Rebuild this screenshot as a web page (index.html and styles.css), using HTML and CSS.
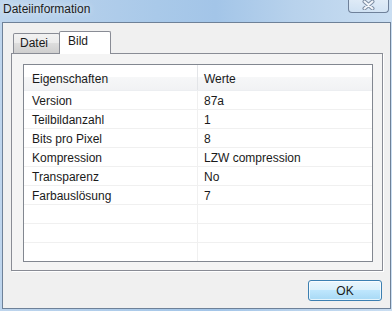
FILE: index.html
```html
<!DOCTYPE html>
<html lang="de">
<head>
    <meta charset="UTF-8">
    <title>Dateiinformation</title>
    <link rel="stylesheet" href="styles.css">
</head>
<body>
    <div class="window">
        <div class="titlebar">
            <span class="title">Dateiinformation</span>
            <span class="close">
                <svg width="15" height="10" viewBox="0 0 15 10">
                    <path d="M3.5 1.5 L11.5 8.5 M11.5 1.5 L3.5 8.5" stroke="#7d8da3" stroke-width="4" stroke-linecap="round"/>
                    <path d="M3.5 1.5 L11.5 8.5 M11.5 1.5 L3.5 8.5" stroke="#f4f7fb" stroke-width="2" stroke-linecap="round"/>
                </svg>
            </span>
        </div>
        <div class="client">
            <div class="tabs">
                <div class="tab">Datei</div>
                <div class="tab active">Bild</div>
            </div>
            <div class="panel">
                <div class="list">
                    <div class="row head"><div class="cell">Eigenschaften</div><div class="cell">Werte</div></div>
                    <div class="row"><div class="cell">Version</div><div class="cell">87a</div></div>
                    <div class="row"><div class="cell">Teilbildanzahl</div><div class="cell">1</div></div>
                    <div class="row"><div class="cell">Bits pro Pixel</div><div class="cell">8</div></div>
                    <div class="row"><div class="cell">Kompression</div><div class="cell">LZW compression</div></div>
                    <div class="row"><div class="cell">Transparenz</div><div class="cell">No</div></div>
                    <div class="row"><div class="cell">Farbauslösung</div><div class="cell">7</div></div>
                    <div class="row"><div class="cell"></div><div class="cell"></div></div>
                    <div class="row"><div class="cell"></div><div class="cell"></div></div>
                    <div class="row"><div class="cell"></div><div class="cell"></div></div>
                </div>
            </div>
            <div class="buttons">
                <button class="ok">OK</button>
            </div>
        </div>
    </div>
</body>
</html>
```

FILE: styles.css
```css
html,body{margin:0; padding:0; width:392px; height:311px; overflow:hidden;}
body{font-family:"Liberation Sans", Arial, sans-serif; font-size:12px; color:#1a1a1a;}

.window{
    width:392px; height:311px; display:flex; flex-direction:column;
    background:linear-gradient(to right, #bed5ed 0%, #a9c9e9 40%, #a3c5e8 55%, #b8d2ec 75%, #cadef2 100%);
}

.titlebar{height:22px; display:flex; justify-content:space-between; align-items:flex-start; padding-left:3px;}
.title{line-height:18px; color:#1c1c1c; text-shadow:0 0 6px rgba(255,255,255,.8);}
.close{
    width:41px; height:13px; margin-right:3px; box-sizing:border-box;
    border:1px solid #6f819a; border-top:0; border-radius:0 0 4px 4px;
    background:linear-gradient(rgba(255,255,255,.45), rgba(255,255,255,.2));
    display:flex; justify-content:center; align-items:flex-start;
}

.client{
    margin:0 1px 0 2px; height:287px; box-sizing:border-box;
    border:1px solid #6e8198; background:#f0f0f0;
    padding:8px 7px 0 8px; display:flex; flex-direction:column;
}

.tabs{height:22px; display:flex; align-items:flex-end; padding-left:2px;}
.tab{
    box-sizing:border-box; height:20px; width:47px; padding-left:6px; line-height:19px;
    border:1px solid #898c95; border-bottom:0; border-radius:2px 2px 0 0;
    background:linear-gradient(#f2f2f2 0%, #ebebeb 50%, #dddddd 50%, #cfcfcf 100%);
}
.tab.active{
    position:relative; z-index:1; height:23px; width:52px; margin:0 0 -1px -1px;
    padding-left:8px; line-height:18px; background:#fff;
}

.panel{
    height:218px; box-sizing:border-box; border:1px solid #898c95; background:#f4f4f4;
    padding:10px 9px 8px 11px; box-shadow:1px 1px 0 #fff;
}

.list{height:198px; box-sizing:border-box; border:1px solid #828790; background:#fff; overflow:hidden;}
.row{display:grid; grid-template-columns:173px 1fr; height:19px; box-sizing:border-box; border-bottom:1px solid #f0f0f0;}
.cell{line-height:20px; padding-left:8px; white-space:nowrap;}
.cell + .cell{border-left:1px solid #f0f0f0; padding-left:6px;}
.row.head{
    height:26px; border-bottom:1px solid #eceef1;
    background:linear-gradient(#fff 0%, #fff 50%, #f6f7f8 50%, #f1f2f4 100%);
}
.row.head .cell{line-height:18px; padding-top:5px;}
.row.head .cell + .cell{border-left-color:#e3e5e8;}

.buttons{display:flex; justify-content:flex-end; padding:9px 1px 0 0;}
.ok{
    width:74px; height:21px; margin:0; padding:0; box-sizing:border-box;
    font-family:inherit; font-size:12px; color:#1a1a1a;
    border:1px solid #3c7fb1; border-radius:3px;
    background:linear-gradient(#eaf6fd 0%, #d9f0fc 50%, #bee6fd 50%, #a7d9f5 100%);
    box-shadow:inset 0 0 0 1px rgba(255,255,255,.7);
}
```
